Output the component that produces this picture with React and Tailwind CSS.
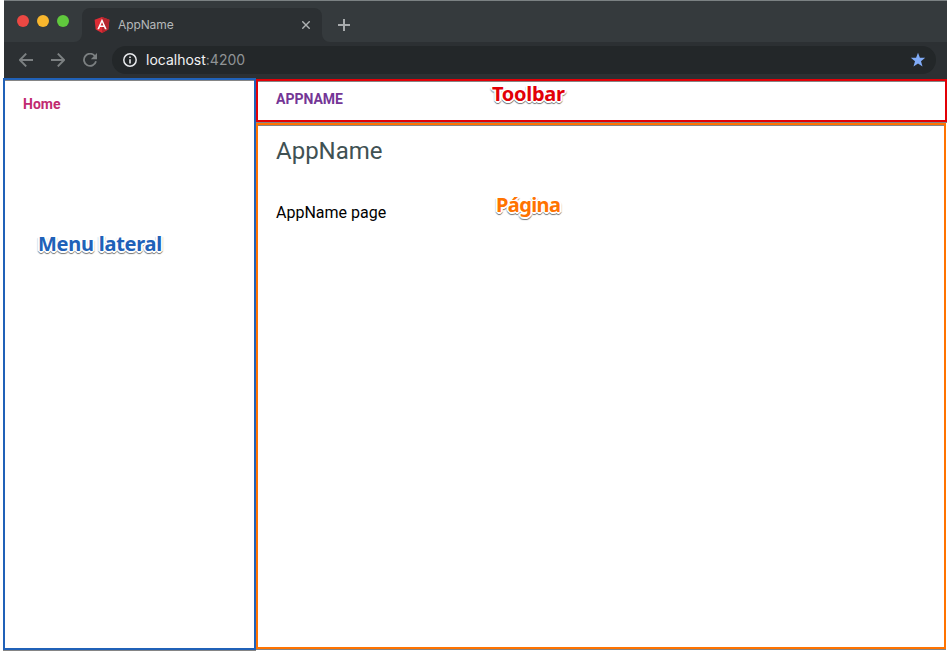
const outline =
  "[text-shadow:-1px_-1px_0_#fff,1px_-1px_0_#fff,-1px_1px_0_#fff,1px_1px_0_#fff,2px_0_0_#fff,-2px_0_0_#fff,0_-2px_0_#fff,0_2px_0_#fff,0_3px_1px_#777,1px_2px_1px_#777,-1px_2px_1px_#777,2px_1px_1px_#aaa,-2px_1px_1px_#aaa]";

function Label({ className, children }) {
  return (
    <span className={`absolute whitespace-nowrap font-['Noto_Sans',sans-serif] text-[20px] leading-6 font-bold ${outline} ${className}`}>
      {children}
    </span>
  );
}

function AngularLogo() {
  return (
    <svg className="h-4 w-4" viewBox="0 0 16 16">
      <path d="M8 0 15.4 2.7 14.3 12.5 8 16 1.7 12.5.6 2.7Z" fill="#dd2c35" />
      <path d="M8 0 15.4 2.7 14.3 12.5 8 16Z" fill="#b5252d" />
      <path d="M8 1.8 3.3 12.3h1.8L6 10h4l.9 2.3h1.8Zm0 3.5 1.4 3.3H6.6Z" fill="#fff" fillRule="evenodd" />
    </svg>
  );
}

function TabStrip() {
  return (
    <div className="flex h-[41px] bg-[#353a3d]">
      <div className="flex w-[78px] gap-2 rounded-br-lg pt-[14px] pl-[13px]">
        <i className="h-3 w-3 rounded-full bg-[#ec4843]" />
        <i className="h-3 w-3 rounded-full bg-[#f8b62d]" />
        <i className="h-3 w-3 rounded-full bg-[#60c83d]" />
      </div>
      <svg className="mt-[33px] -ml-2 h-2 w-2" viewBox="0 0 8 8">
        <path d="M8 0V8H0A8 8 0 0 0 8 0Z" fill="#2c3033" />
      </svg>
      <div className="mt-[7px] flex h-[34px] w-[240px] items-center rounded-t-lg bg-[#2c3033] pl-[12px]">
        <AngularLogo />
        <span className="ml-2 font-['Inter',sans-serif] text-[12px] tracking-[-0.1px] text-[#b5b8ba]">AppName</span>
        <svg className="mr-3 ml-auto h-2 w-2" viewBox="0 0 8 8" stroke="#afb2b4" strokeWidth="1.4">
          <path d="M.3.3 7.7 7.7M7.7.3.3 7.7" />
        </svg>
      </div>
      <svg className="mt-[33px] h-2 w-2" viewBox="0 0 8 8">
        <path d="M0 0V8H8A8 8 0 0 1 0 0Z" fill="#2c3033" />
      </svg>
      <svg className="mt-[18px] ml-2 h-3 w-3" viewBox="0 0 12 12" stroke="#a8abad" strokeWidth="2">
        <path d="M6 0V12M0 6H12" />
      </svg>
    </div>
  );
}

function AddressBar() {
  return (
    <div className="flex h-[37px] bg-[#2c3033] pt-1">
      <div className="flex h-7 w-[108px] items-center gap-[18px] pl-[15px]">
        <svg className="h-[14px] w-[14px]" viewBox="0 0 14 14" fill="none" stroke="#7c8082" strokeWidth="1.9">
          <path d="M14 7H1M7.2.6.9 7 7.2 13.4" />
        </svg>
        <svg className="h-[14px] w-[14px]" viewBox="0 0 14 14" fill="none" stroke="#7c8082" strokeWidth="1.9">
          <path d="M0 7H13M6.8.6 13.1 7 6.8 13.4" />
        </svg>
        <svg className="h-[14px] w-[14px]" viewBox="0 0 14 14">
          <path d="M12 3.2A6.1 6.1 0 1 0 13 8.3" fill="none" stroke="#7c8082" strokeWidth="1.8" />
          <path d="M14 0V6.2H7.8Z" fill="#7c8082" />
        </svg>
      </div>
      <div className="flex h-7 w-[824px] items-center rounded-full bg-[#232729] pr-[10px] pl-[11px]">
        <svg className="h-[14px] w-[14px]" viewBox="0 0 14 14">
          <circle cx="7" cy="7" r="6.2" fill="none" stroke="#e8eaed" strokeWidth="1.5" />
          <path d="M7 6.2V10.4M7 3.5V5" stroke="#e8eaed" strokeWidth="1.6" />
        </svg>
        <span className="mb-[2px] ml-[9px] font-['Inter',sans-serif] text-[14px] text-[#909496]">
          <span className="text-[#f1f2f3]">localhost</span>:4200
        </span>
        <svg className="ml-auto h-4 w-4" viewBox="0 0 16 16">
          <path d="m8 .8 1.9 5h5.3L11 9.2l1.5 5.3L8 11.4l-4.5 3.1L5 9.2.8 5.8h5.3Z" fill="#80abf7" />
        </svg>
      </div>
    </div>
  );
}

export default function App() {
  return (
    <div className="h-[651px] w-[947px] overflow-hidden bg-white font-['Roboto',sans-serif]">
      <header className="ml-1 h-[79px] border-t border-[#7b8183] bg-[#24282a]">
        <TabStrip />
        <AddressBar />
      </header>
      <div className="flex pl-[3px]">
        <aside className="relative -mt-px h-[572px] w-[253px] border-2 border-[#2061b8] bg-white pt-[14px] pl-[18px] shadow-[0_1px_0_#858585,inset_0_1px_0_#858585]">
          <a className="block text-[14px] leading-5 font-bold text-[#c12b70]">Home</a>
          <Label className="top-[152px] left-[33px] tracking-[-0.25px] text-[#2061b8]">Menu lateral</Label>
        </aside>
        <div className="flex flex-col">
          <nav className="relative h-[43px] w-[691px] border-2 border-[#e20007] bg-white pt-[8px] pl-[18px] shadow-[0_1px_0_#858585,inset_0_1px_0_#858585]">
            <span className="block text-[14px] leading-5 font-bold text-[#743696]">APPNAME</span>
            <Label className="top-[1px] left-[234px] tracking-[-0.3px] text-[#e20007]">Toolbar</Label>
          </nav>
          <main className="relative mt-px h-[526px] w-[690px] border-2 border-[#ff7300] bg-white pl-[18px] shadow-[0_1px_0_#858585,inset_0_1px_0_#858585]">
            <h1 className="pt-[10px] text-[24px] leading-8 text-[#405153]">AppName</h1>
            <p className="pt-[34px] text-[16px] leading-6 text-black">AppName page</p>
            <Label className="top-[68px] left-[238px] tracking-[-0.6px] text-[#ff7300]">Página</Label>
          </main>
        </div>
      </div>
    </div>
  );
}
